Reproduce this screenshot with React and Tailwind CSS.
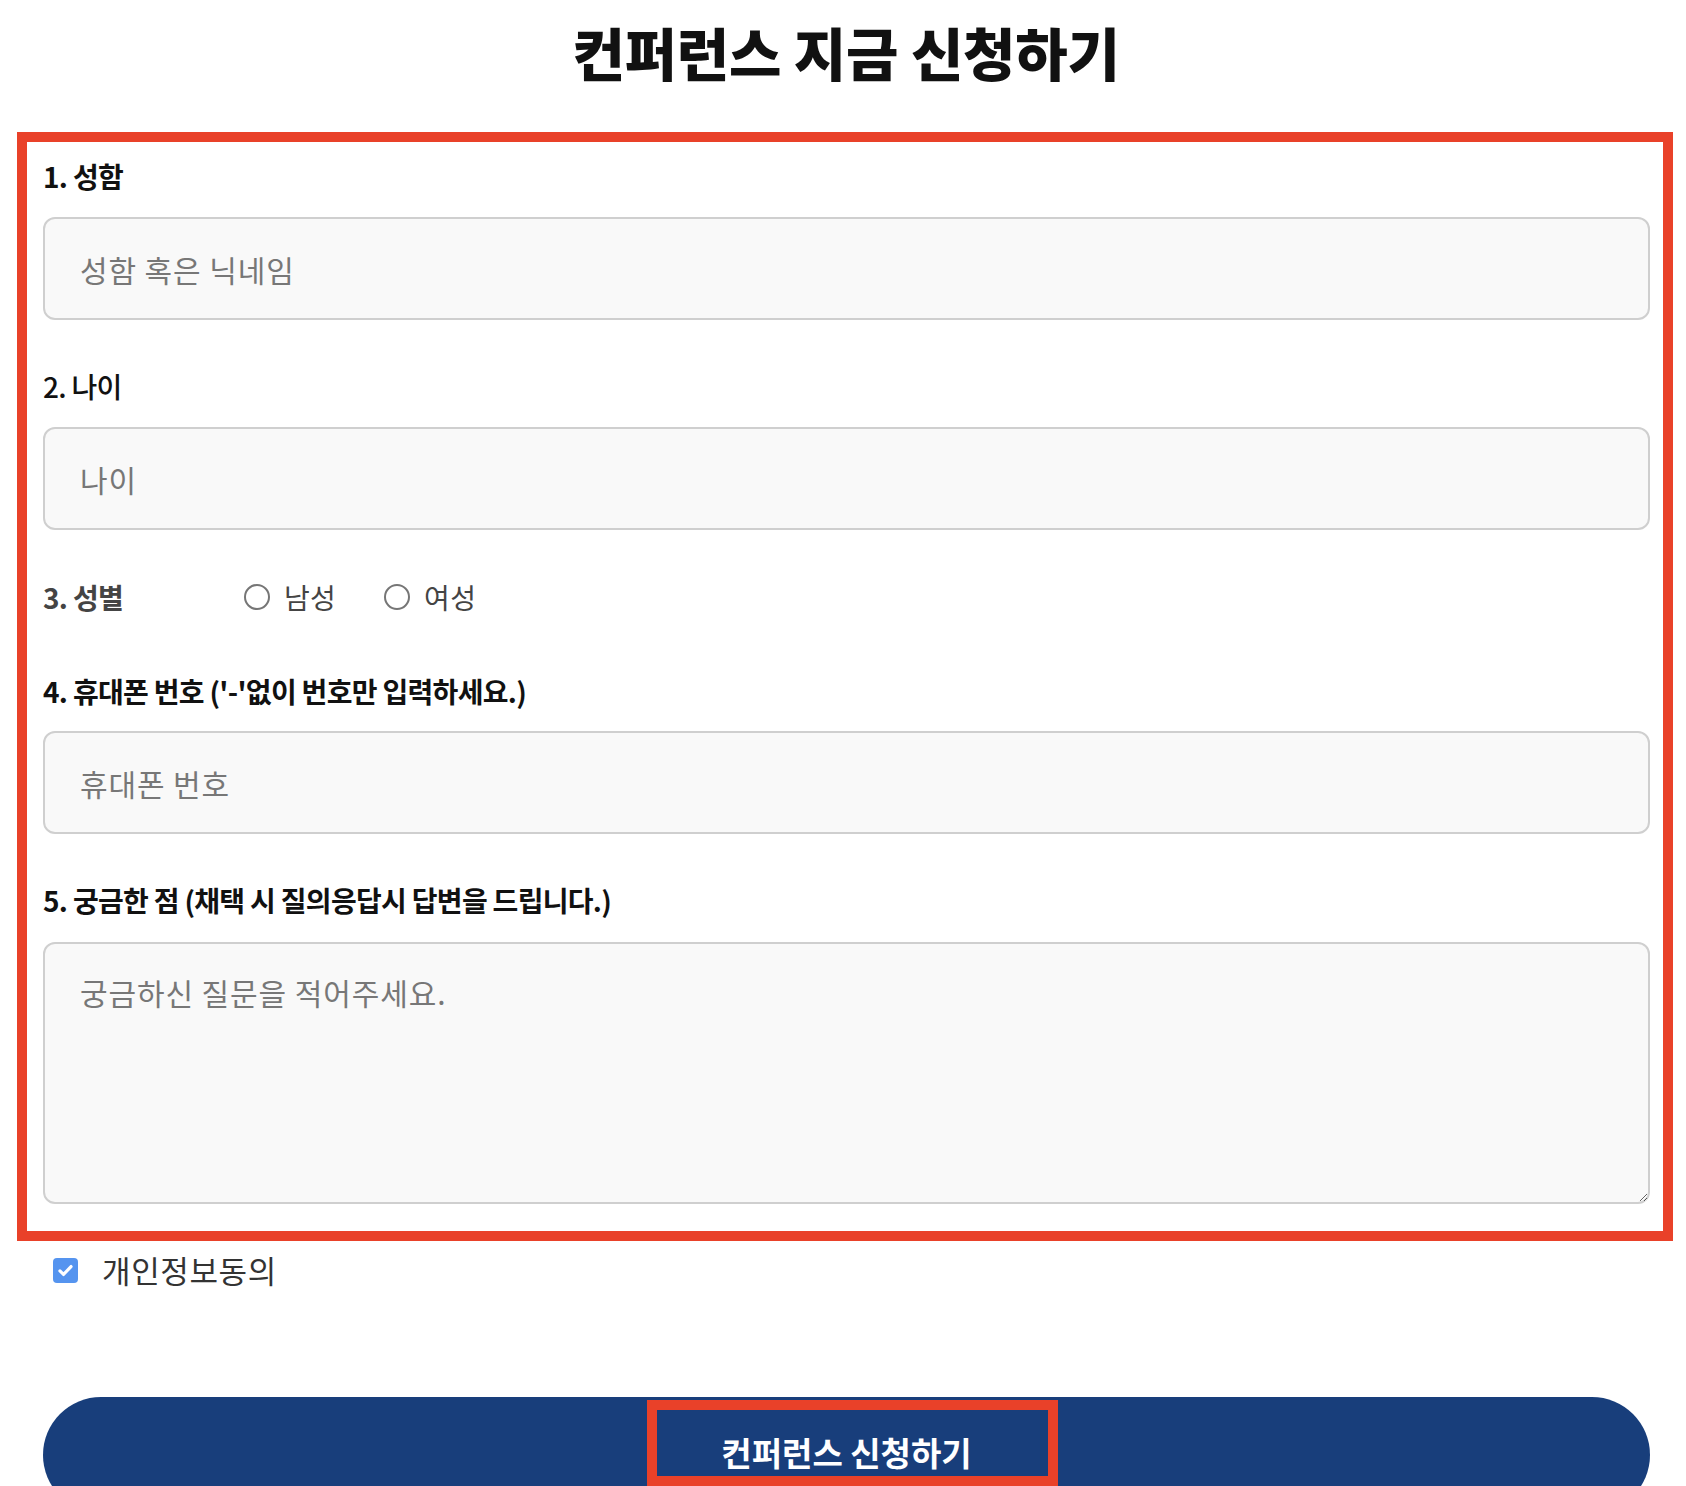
import { useState } from 'react';

const font = { fontFamily: '"Noto Sans CJK KR", "Noto Sans", sans-serif' };

function Label({ children, className = '' }) {
  return (
    <div className={`h-8 leading-[32px] text-[28px] tracking-[-0.025em] text-[#111] ${className}`}>
      {children}
    </div>
  );
}

function Radio({ label, checked, onClick }) {
  return (
    <button type="button" onClick={onClick} className="flex items-center">
      <span className="w-[26px] h-[26px] rounded-full border-2 border-[#767676] bg-white flex items-center justify-center">
        {checked && <span className="w-[14px] h-[14px] rounded-full bg-[#1a73e8]" />}
      </span>
      <span className="ml-[14px] text-[28px] leading-[32px] text-[#444] tracking-[0.01em]">{label}</span>
    </button>
  );
}

export default function App() {
  const [gender, setGender] = useState('');
  const [agree, setAgree] = useState(true);

  const inputClass =
    'block w-full h-[103px] rounded-[12px] border-2 border-[#cfcfcf] bg-[#f9f9f9] pl-[35px] text-[30px] tracking-[0.03em] text-[#333] placeholder:text-[#777] outline-none';

  return (
    <div className="min-h-screen bg-white pb-10" style={font}>
      <h1 className="pt-[23px] h-[82px] leading-[56px] text-center text-[57px] font-black tracking-[-0.005em] text-[#111] pl-[6px]">
        컨퍼런스 지금 신청하기
      </h1>

      <form className="mt-[50px] ml-[17px] mr-[13px] border-[10px] border-[#e94129] pl-4 pr-[13px] pt-[18px] pb-[27px]">
        <Label className="font-bold">1. 성함</Label>
        <input className={`mt-[25px] ${inputClass}`} placeholder="성함 혹은 닉네임" />

        <Label className="mt-[50px] font-medium">2. 나이</Label>
        <input className={`mt-[25px] ${inputClass}`} placeholder="나이" />

        <div className="mt-[51px] flex items-center">
          <Label className="w-[201px] font-semibold !text-[#444]">3. 성별</Label>
          <Radio label="남성" checked={gender === 'm'} onClick={() => setGender('m')} />
          <div className="w-[48px]" />
          <Radio label="여성" checked={gender === 'f'} onClick={() => setGender('f')} />
        </div>

        <Label className="mt-[62px] font-bold">4. 휴대폰 번호 ('-'없이 번호만 입력하세요.)</Label>
        <input className={`mt-[24px] ${inputClass}`} placeholder="휴대폰 번호" />

        <Label className="mt-[50px] font-bold">5. 궁금한 점 (채택 시 질의응답시 답변을 드립니다.)</Label>
        <textarea
          className="mt-[26px] block w-full h-[262px] rounded-[12px] border-2 border-[#cfcfcf] bg-[#f9f9f9] pl-[35px] pt-[28px] leading-[40px] text-[30px] tracking-[0.03em] text-[#333] placeholder:text-[#777] outline-none"
          placeholder="궁금하신 질문을 적어주세요."
        />
      </form>

      <label className="mt-[14px] ml-[53px] flex items-center h-[30px] cursor-pointer" onClick={() => setAgree(!agree)}>
        <span className={`w-[25px] h-[25px] rounded-[4px] flex items-center justify-center ${agree ? 'bg-[#5594ef]' : 'bg-white border-2 border-[#767676]'}`}>
          {agree && (
            <svg viewBox="0 0 24 24" className="w-[19px] h-[19px]" fill="none" stroke="white" strokeWidth="4" strokeLinecap="round" strokeLinejoin="round">
              <path d="M5 12.5l4.5 4.5L19 7" />
            </svg>
          )}
        </span>
        <span className="ml-[24px] text-[31px] leading-[32px] tracking-[0.02em] text-[#333]">개인정보동의</span>
      </label>

      <div className="mt-[112px] ml-[43px] mr-[36px]">
        <button type="button" className="w-full h-[116px] rounded-full bg-[#183e7b] flex justify-center items-start">
          <span className="mt-[3px] ml-[12px] w-[411px] h-[86px] border-[10px] border-[#e94129] flex items-center justify-center pt-[18px] pr-[12px] text-white text-[33px] font-bold leading-[40px]">
            컨퍼런스 신청하기
          </span>
        </button>
      </div>
    </div>
  );
}
